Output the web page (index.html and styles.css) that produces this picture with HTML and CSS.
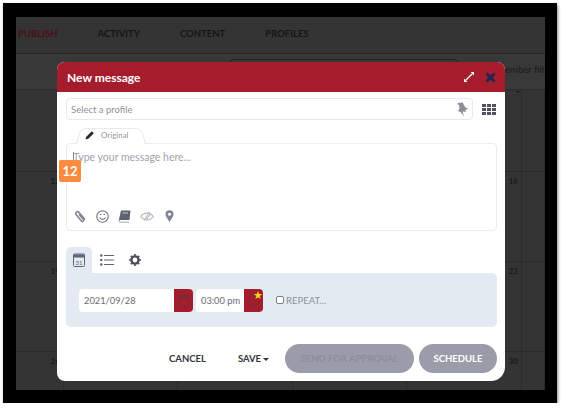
FILE: index.html
```html
<!DOCTYPE html>
<html lang="en">
<head>
    <meta charset="UTF-8">
    <title>New message</title>
    <link rel="stylesheet" href="styles.css">
</head>
<body>
    <div class="frame">
        <div class="app">
            <nav class="nav">
                <span class="nav-item active">PUBLISH</span>
                <span class="nav-item">ACTIVITY</span>
                <span class="nav-item">CONTENT</span>
                <span class="nav-item">PROFILES</span>
            </nav>
            <div class="toolbar">
                <div class="search"></div>
                <span class="filter">Member filt</span>
            </div>
            <div class="cal-head">
                <span class="cal-caret"></span>
            </div>
            <div class="calendar">
                <div class="cell"></div><div class="cell"></div><div class="cell"></div><div class="cell"></div><div class="cell"></div><div class="cell"></div>
                <div class="cell">12</div><div class="cell"></div><div class="cell"></div><div class="cell"></div><div class="cell">16</div><div class="cell"></div>
                <div class="cell">19</div><div class="cell"></div><div class="cell"></div><div class="cell"></div><div class="cell">23</div><div class="cell"></div>
                <div class="cell">26</div><div class="cell"></div><div class="cell"></div><div class="cell"></div><div class="cell">30</div><div class="cell"></div>
            </div>
        </div>

        <div class="modal">
            <header class="modal-head">
                <h1>New message</h1>
                <svg class="head-icon" width="10" height="10" viewBox="0 0 10 10">
                    <path d="M2 8 8 2" stroke="#fff" stroke-width="1.400"/>
                    <path d="M0 6.500 3.500 10H0zM10 3.500 6.500 0H10z" fill="#fff"/>
                </svg>
                <svg class="head-icon" width="11" height="11" viewBox="0 0 11 11">
                    <path d="M1.500 1.500l8 8M9.500 1.500l-8 8" stroke="#20264a" stroke-width="3"/>
                </svg>
            </header>

            <div class="modal-body">
                <div class="profile-row">
                    <div class="profile-field">
                        <span>Select a profile</span>
                        <svg width="13" height="15" viewBox="0 0 13 15">
                            <path d="M1.500 1 7 .5l.3 1.500 2.200 3.500 2.500 1-2.800 2 .8 1.500-3.500-.5L8 14.500 4.500 10 2 9l1.500-2.500L3 3 1.800 2.500z" fill="#8d8f96"/>
                        </svg>
                    </div>
                    <svg class="grid-icon" width="14" height="11" viewBox="0 0 14 11" fill="#50535f">
                        <path d="M0 0h4v3H0zM5 0h4v3H5zM10 0h4v3h-4zM0 4h4v3H0zM5 4h4v3H5zM10 4h4v3h-4zM0 8h4v3H0zM5 8h4v3H5zM10 8h4v3h-4z"/>
                    </svg>
                </div>

                <div class="editor-tab">
                    <svg width="10" height="10" viewBox="0 0 10 10">
                        <path d="M0.500 9.500l.8-2.800 5.500-5.500 2 2-5.500 5.500z" fill="#23262e"/>
                    </svg>
                    <span>Original</span>
                </div>
                <div class="editor">
                    <div class="placeholder"><i class="cursor"></i>Type your message here...</div>
                    <div class="badge">12</div>
                    <div class="editor-tools">
                        <svg width="13" height="14" viewBox="0 0 13 14" fill="none" stroke="#7f8494" stroke-width="1.500">
                            <path d="M11 10.500 5 3.500a1.800 1.800 0 0 0-3 2l5.500 6.500a1.200 1.200 0 0 0 2-1.500L5 5.500"/>
                        </svg>
                        <svg width="13" height="13" viewBox="0 0 13 13" fill="none" stroke="#6f7482" stroke-width="1.100">
                            <circle cx="6.500" cy="6.500" r="5.700"/>
                            <path d="M3.500 7.500c1.500 2.500 4.500 2.500 6 0M4 4.500h1.500M7.500 4.500H9"/>
                        </svg>
                        <svg width="13" height="13" viewBox="0 0 13 13">
                            <path d="M3 0.500h9.500l-1 9.500H2l-1.500 1.500z" fill="#5d6270"/>
                            <path d="M1 11.500h10v1.200H1z" fill="#b4b7c0"/>
                            <path d="M4.500 3h5.500" stroke="#c9ccd4" stroke-width="1"/>
                        </svg>
                        <svg width="14" height="11" viewBox="0 0 14 11" fill="none" stroke="#b4b7c0" stroke-width="1.100">
                            <path d="M0.700 5.500c3-4.500 9.600-4.500 12.600 0-3 4.500-9.600 4.500-12.600 0zM4 9.500 9.500 1M6 9 10.500 3"/>
                        </svg>
                        <svg class="pin" width="9" height="12" viewBox="0 0 9 12">
                            <path d="M4.500 12C2 8 .5 6.300.5 4.300a4 4 0 0 1 8 0C8.500 6.300 7 8 4.500 12z" fill="#7f8494"/>
                            <circle cx="4.500" cy="4.300" r="1.500" fill="#fff"/>
                        </svg>
                    </div>
                </div>

                <div class="sched-tabs">
                    <div class="sched-tab current">
                        <svg width="12" height="14" viewBox="0 0 12 14">
                            <rect x="0.500" y="1" width="11" height="12.500" rx="1" fill="#e4eaf1" stroke="#5f6472"/>
                            <path d="M0.500 1.500h11v3h-11z" fill="#5f6472"/>
                            <text x="6" y="11.500" class="cal-num">31</text>
                        </svg>
                    </div>
                    <div class="sched-tab">
                        <svg width="14" height="12" viewBox="0 0 14 12" fill="#5f6472">
                            <circle cx="1.300" cy="1.500" r="1.300"/><circle cx="1.300" cy="6" r="1.300"/><circle cx="1.300" cy="10.500" r="1.300"/>
                            <path d="M4 1h10v1H4zM4 5.500h10v1H4zM4 10h10v1H4z"/>
                        </svg>
                    </div>
                    <div class="sched-tab">
                        <svg width="12" height="12" viewBox="0 0 12 12">
                            <circle cx="6" cy="6" r="3.600" fill="none" stroke="#4d505b" stroke-width="2.400"/>
                            <path d="M6 0v12M0 6h12M1.800 1.800l8.400 8.400M10.200 1.800l-8.400 8.400" stroke="#4d505b" stroke-width="1.700" stroke-dasharray="1.700 8.600"/>
                        </svg>
                    </div>
                </div>
                <div class="sched-panel">
                    <div class="picker date">
                        <span>2021/09/28</span>
                        <div class="picker-btn">
                            <svg width="10" height="11" viewBox="0 0 10 11" fill="none" stroke="#6d2f3b" stroke-width="1">
                                <rect x="0.500" y="1" width="9" height="9.500"/>
                                <path d="M0.500 2.500h9" stroke-width="2"/>
                            </svg>
                        </div>
                    </div>
                    <div class="picker time">
                        <span>03:00 pm</span>
                        <div class="picker-btn">
                            <svg width="12" height="12" viewBox="0 0 12 12" fill="none" stroke="#6d2f3b" stroke-width="1">
                                <circle cx="6" cy="6" r="5"/>
                                <path d="M6 3v3l2 1"/>
                            </svg>
                            <span class="star">★</span>
                        </div>
                    </div>
                    <label class="repeat"><span class="check"></span>REPEAT...</label>
                </div>
            </div>

            <footer class="modal-foot">
                <span class="link cancel">CANCEL</span>
                <span class="link save">SAVE <i class="caret"></i></span>
                <span class="pill approval">SEND FOR APPROVAL</span>
                <span class="pill schedule">SCHEDULE</span>
            </footer>
        </div>
    </div>
</body>
</html>
```

FILE: styles.css
```css
body {
    margin: 0;
    background: #fff;
    font-family: 'Lato', sans-serif;
    overflow: hidden;
}

.frame {
    position: relative;
    box-sizing: border-box;
    width: 554px;
    height: 400px;
    margin: 3px 0 0 3px;
    padding: 14px 12px 13px 13px;
    background: #000;
    box-shadow: 1px 2px 3px rgba(0, 0, 0, 0.45);
    filter: blur(0.35px);
}

.app {
    height: 100%;
    background: #343434;
    color: #141414;
    overflow: hidden;
}

.nav {
    display: flex;
    box-sizing: border-box;
    height: 37px;
    padding: 11px 0 0 2px;
    border-bottom: 1px solid #262626;
    font-size: 9.500px;
    font-weight: 700;
    gap: 40px;
}

.nav-item.active {
    color: #4c0d18;
}

.toolbar {
    display: flex;
    height: 26px;
    background: #383838;
    font-size: 9.500px;
}

.search {
    width: 230px;
    height: 14px;
    margin: 5px 37px 0 212px;
    border: 1px solid #222;
    border-radius: 6px;
}

.filter {
    padding-top: 10px;
    white-space: nowrap;
    color: #1c1c1c;
}

.cal-head {
    display: flex;
    justify-content: flex-end;
    height: 9px;
    background: #3a3a3a;
    border-bottom: 1px solid #2c2c2c;
}

.cal-caret {
    width: 0;
    height: 0;
    margin: 11px 25px 0 0;
    border: 2.500px solid transparent;
    border-top-color: #141414;
    border-bottom: none;
}

.calendar {
    display: grid;
    grid-template-columns: 47.500px repeat(4, 114.500px) 1fr;
    grid-template-rows: 82px repeat(3, 90px);
}

.cell {
    box-sizing: border-box;
    padding: 5px 3px 0 0;
    border-right: 1px solid #2a2a2a;
    border-bottom: 1px solid #2a2a2a;
    color: #171717;
    font-size: 7.500px;
    font-weight: 700;
    text-align: right;
}

.modal {
    position: absolute;
    left: 54px;
    top: 59px;
    width: 448px;
    height: 319px;
    background: #fff;
    border-radius: 8px 8px 14px 8px;
    overflow: hidden;
}

.modal-head {
    display: flex;
    align-items: center;
    height: 30px;
    padding: 0 9px 0 10px;
    background: #a51c2d;
    gap: 11px;
}

.modal-head h1 {
    flex: 1;
    margin: 0;
    color: #fff;
    font-size: 12px;
    font-weight: 700;
}

.modal-body {
    padding: 6px 8px 0 9px;
}

.profile-row {
    display: flex;
    align-items: center;
    gap: 9px;
}

.profile-field {
    display: flex;
    flex: 1;
    align-items: center;
    justify-content: space-between;
    height: 20px;
    padding: 0 3px 0 4px;
    border: 1px solid #e3e9f0;
    border-radius: 4px;
    color: #8f929a;
    font-size: 9.500px;
}

.grid-icon {
    margin-right: 1px;
}

.editor-tab {
    position: relative;
    display: flex;
    align-items: center;
    box-sizing: border-box;
    width: 70px;
    height: 18px;
    margin: 6px 0 -1px 10px;
    padding-left: 9px;
    color: #8f929a;
    font-size: 8px;
    gap: 6px;
    z-index: 1;
}

.editor-tab::before {
    content: "";
    position: absolute;
    inset: -1px 0 0;
    box-sizing: border-box;
    border: 1px solid #dfe7ef;
    border-bottom: none;
    border-radius: 6px 6px 0 0;
    background: #fff;
    transform: perspective(30px) rotateX(14deg);
    transform-origin: bottom;
    z-index: -1;
}

.editor {
    position: relative;
    box-sizing: border-box;
    height: 88px;
    border: 1px solid #e9edf2;
    border-radius: 4px;
}

.placeholder {
    padding: 7px 0 0 6px;
    color: #a0a3aa;
    font-size: 10.500px;
}

.cursor {
    display: inline-block;
    width: 1px;
    height: 11px;
    margin-right: -1px;
    background: #85888f;
    vertical-align: -2px;
}

.badge {
    position: absolute;
    left: -8px;
    top: 16px;
    width: 22px;
    height: 22px;
    border-radius: 2px;
    background: #fb8b3f;
    color: #fff;
    font-size: 13px;
    font-weight: 700;
    line-height: 22px;
    text-align: center;
}

.editor-tools {
    position: absolute;
    left: 7px;
    bottom: 7px;
    display: flex;
    align-items: center;
    gap: 9px;
}

.editor-tools .pin {
    margin-left: 2px;
}

.sched-tabs {
    display: flex;
    margin-top: 16px;
    height: 26px;
}

.sched-tab {
    display: flex;
    align-items: center;
    justify-content: center;
    width: 26px;
    margin-right: 2px;
}

.sched-tab.current {
    background: #e4eaf1;
    border-radius: 5px 5px 0 0;
}

.cal-num {
    fill: #5f6472;
    font-size: 6px;
    text-anchor: middle;
}

.sched-panel {
    display: flex;
    align-items: center;
    height: 54px;
    padding-left: 13px;
    background: #e4eaf1;
    border-radius: 0 5px 5px 5px;
}

.picker {
    display: flex;
    align-items: stretch;
    box-sizing: border-box;
    height: 23px;
    background: #fff;
    border-radius: 4px;
    color: #6a6d75;
    font-size: 9.300px;
    line-height: 23px;
    overflow: hidden;
}

.picker > span {
    flex: 1;
    padding-left: 5px;
    white-space: nowrap;
}

.picker.date {
    width: 114px;
    margin-right: 3px;
}

.picker.time {
    width: 67px;
    margin-right: 13px;
}

.picker-btn {
    position: relative;
    display: flex;
    flex: none;
    align-items: center;
    justify-content: center;
    width: 19px;
    background: #a51c2d;
}

.star {
    position: absolute;
    top: 0;
    right: 0;
    color: #fcd116;
    font-size: 11px;
    line-height: 12px;
}

.repeat {
    display: flex;
    align-items: center;
    color: #8d9099;
    font-size: 9.500px;
}

.check {
    box-sizing: border-box;
    width: 8px;
    height: 8px;
    margin-right: 2px;
    border: 1px solid #7d808a;
    border-radius: 2px;
    background: #fff;
}

.modal-foot {
    display: flex;
    align-items: center;
    height: 29px;
    margin: 17px 8px 0 0;
    font-size: 9.500px;
    font-weight: 700;
}

.link {
    color: #33353d;
}

.cancel {
    margin-left: 112px;
}

.save {
    margin-left: 32px;
}

.caret {
    display: inline-block;
    border: 3.500px solid transparent;
    border-top-color: #33353d;
    border-bottom: none;
    vertical-align: middle;
}

.pill {
    display: flex;
    align-items: center;
    justify-content: center;
    height: 29px;
    border-radius: 15px;
    background: #9a9ca9;
}

.approval {
    width: 129px;
    margin-left: auto;
    margin-right: 5px;
    color: #8c8e9b;
}

.schedule {
    width: 78px;
    color: #fff;
}
```
